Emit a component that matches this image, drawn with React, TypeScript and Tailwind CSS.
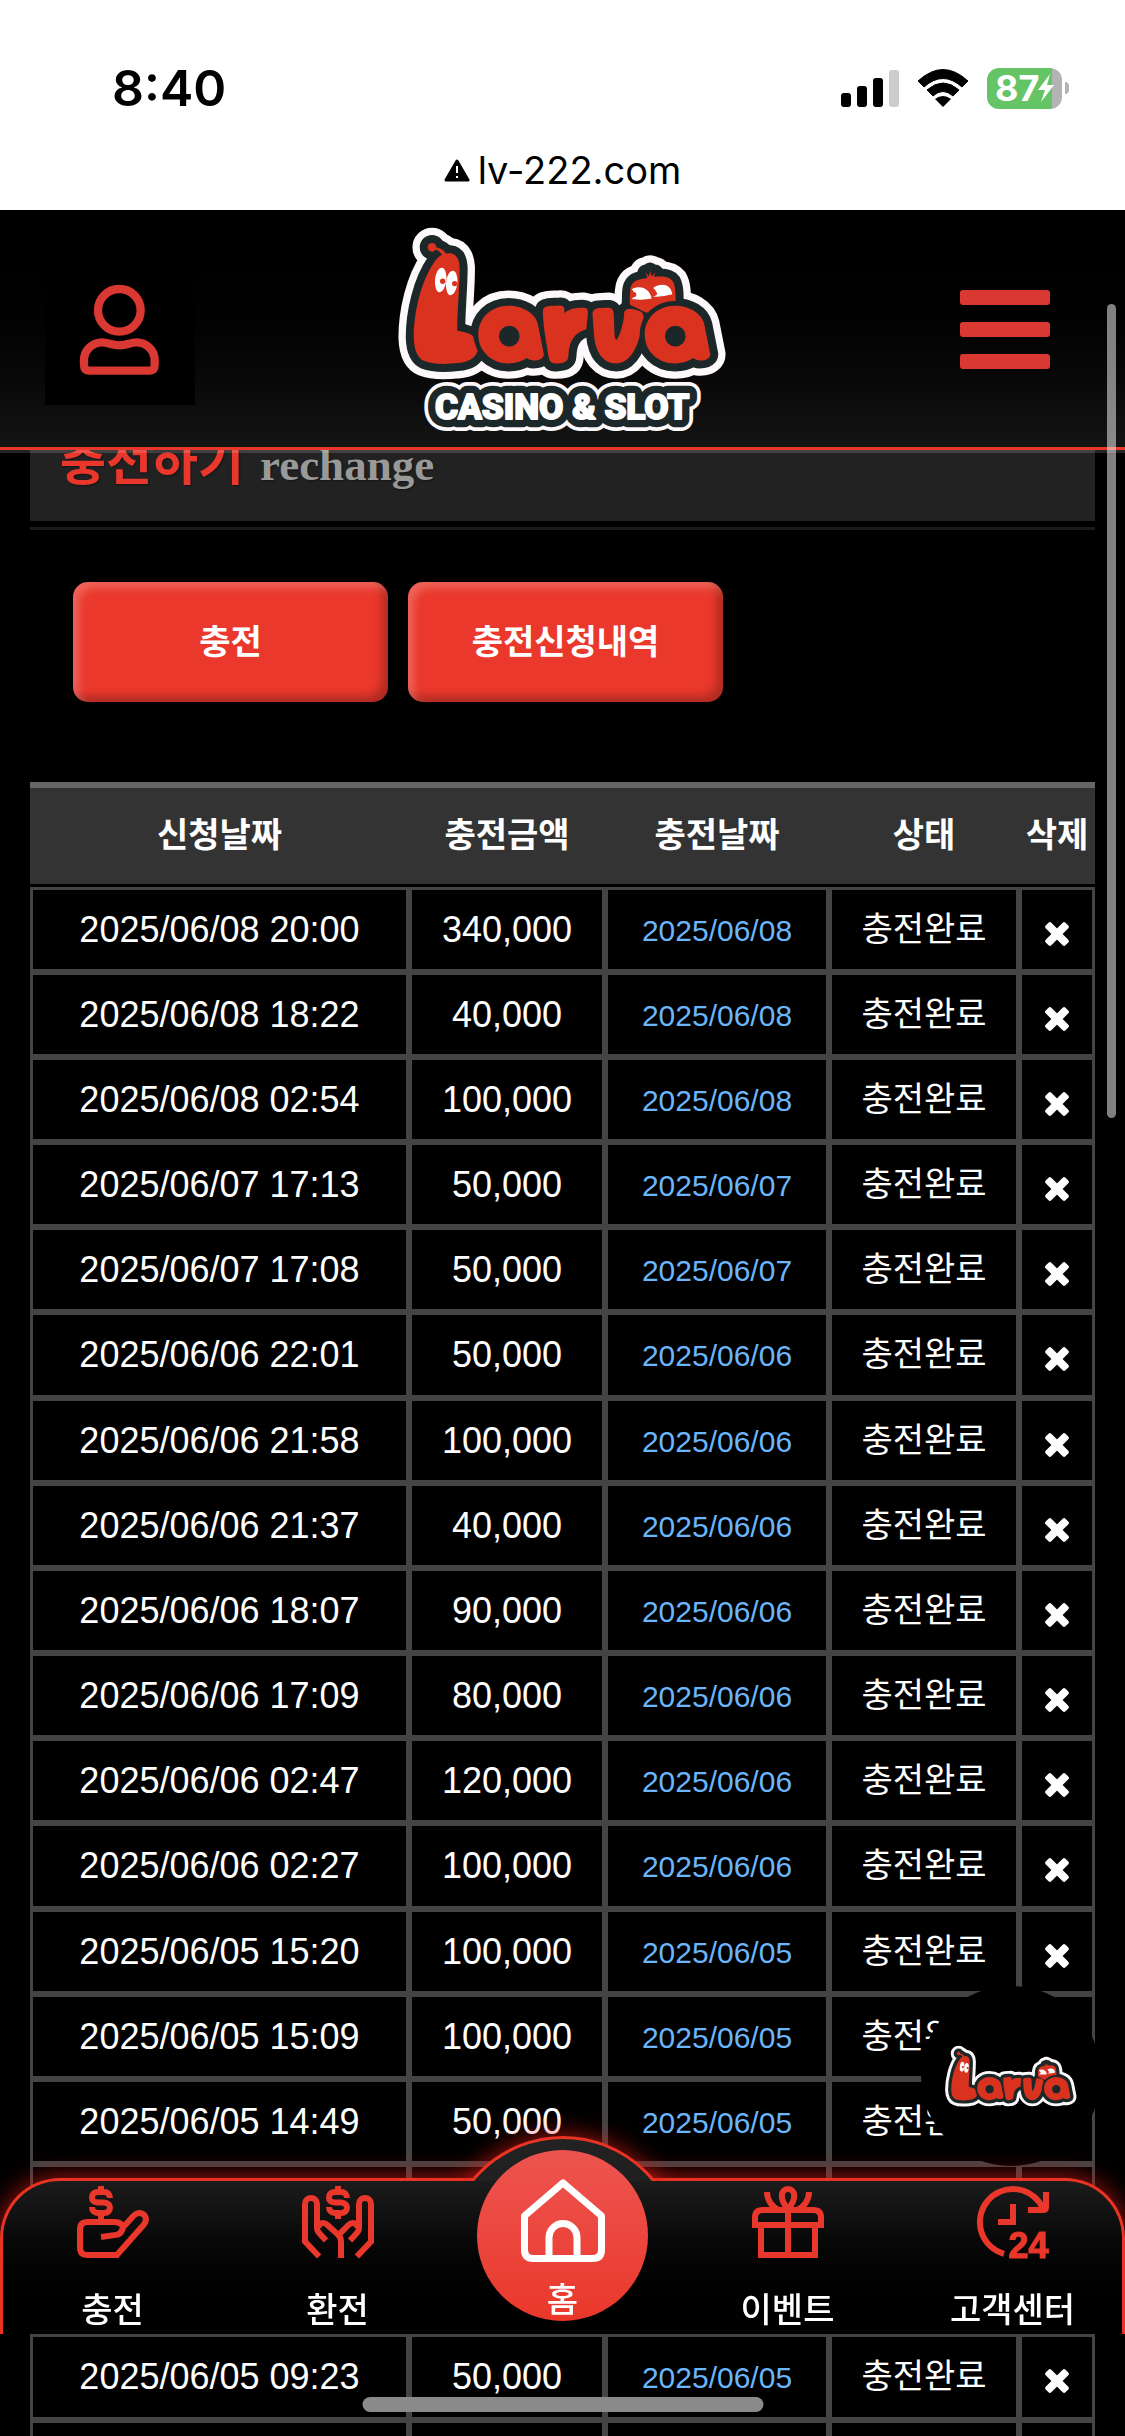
import React from "react";

type Row = { requested: string; amount: string; date: string; status: string };

const done = "충전완료";
const rows: Row[] = [
  ["2025/06/08 20:00", "340,000"],
  ["2025/06/08 18:22", "40,000"],
  ["2025/06/08 02:54", "100,000"],
  ["2025/06/07 17:13", "50,000"],
  ["2025/06/07 17:08", "50,000"],
  ["2025/06/06 22:01", "50,000"],
  ["2025/06/06 21:58", "100,000"],
  ["2025/06/06 21:37", "40,000"],
  ["2025/06/06 18:07", "90,000"],
  ["2025/06/06 17:09", "80,000"],
  ["2025/06/06 02:47", "120,000"],
  ["2025/06/06 02:27", "100,000"],
  ["2025/06/05 15:20", "100,000"],
  ["2025/06/05 15:09", "100,000"],
  ["2025/06/05 14:49", "50,000"],
  ["", ""],
  ["", ""],
  ["2025/06/05 09:23", "50,000"],
  ["", ""],
].map(([requested, amount]) => ({
  requested,
  amount,
  date: requested.slice(0, 10),
  status: requested ? done : "",
}));

function LarvaShapes() {
  return (
    <g strokeLinejoin="round" strokeLinecap="round">
      <circle cx="158" cy="104" r="13" />
      <path d="M160 103Q190 103 202 126L190 130Q182 112 160 109Z" />
      <path d="M752 276L753 238C755 210 765 202 800 197C840 188 870 190 881 205C890 220 890 245 890 268L850 300H800Z" />
      <path d="M806 198L799 180L810 192L813 174L818 192L829 180L823 198Z" />
      <path d="M103 375C103 300 125 205 165 148C178 128 195 121 212 122C235 124 240 145 241 165C241 230 233 300 234 355C255 358 275 364 282 372C285 390 290 402 295 415C288 440 262 450 235 452C200 456 160 456 135 446C113 436 104 410 103 375Z" />
      <path d="M491 300C490 278 505 281 543 279C555 278 558 290 555 303C567 290 590 285 615 286C632 288 626 300 622 350C590 360 570 380 568 430C567 455 540 453 527 453C510 452 508 440 503 400C496 360 492 330 491 300Z" />
      <path d="M640 305C641 284 660 287 690 286C705 288 704 300 705 330C706 365 706 380 712 382C718 382 735 330 735 305C735 286 755 288 775 293C800 300 797 312 782 370C770 420 745 453 712 453C675 453 650 425 645 370Z" />
      <RoundShape />
      <g transform="translate(500 0)">
        <RoundShape />
      </g>
    </g>
  );
}

function RoundShape() {
  return (
    <path d="M388 280C430 280 468 302 476 335L494 425C494 446 455 449 443 437Q420 453 388 453C335 453 297 415 297 366C297 318 335 280 388 280Z" />
  );
}

function LarvaLogo({ tagline = false, className }: { tagline?: boolean; className: string }) {
  return (
    <svg
      viewBox={tagline ? "50 40 1000 625" : "50 40 1000 464"}
      className={className}
      role="img"
      aria-label="Larva"
    >
      <g fill="#fdf9fa" stroke="#fdf9fa" strokeWidth="92">
        <LarvaShapes />
      </g>
      <g fill="#1c2729" stroke="#1c2729" strokeWidth="48">
        <LarvaShapes />
      </g>
      <g fill="#d9331f">
        <LarvaShapes />
      </g>
      <g transform="translate(500 0)" fill="#d9331f" stroke="#1c2729" strokeWidth="30" strokeLinejoin="round" paintOrder="stroke">
        <RoundShape />
      </g>
      <circle cx="390" cy="371" r="31" fill="#1c2729" />
      <circle cx="889" cy="371" r="31" fill="#1c2729" />
      <g fill="#fff">
        <ellipse cx="184" cy="202" rx="17" ry="37" transform="rotate(6 184 202)" />
        <ellipse cx="217" cy="211" rx="17" ry="37" transform="rotate(6 217 211)" />
        <path d="M758 230C785 216 812 228 818 258Q790 264 758 259C770 250 768 240 758 230Z" />
        <path d="M822 226C845 210 875 212 880 245Q850 254 822 252C836 246 834 234 822 226Z" />
      </g>
      <g fill="#d9331f">
        <circle cx="190" cy="206" r="8" />
        <circle cx="226" cy="213" r="8" />
        <circle cx="764" cy="246" r="8" />
        <circle cx="827" cy="243" r="7" />
      </g>
      {tagline && (
        <g
          fontFamily="Roboto, 'Liberation Sans', sans-serif"
          fontWeight="800"
          fontSize="106"
          textAnchor="middle"
          strokeLinejoin="round"
        >
          <text x="549" y="619" fill="#fff" stroke="#fdf9fa" strokeWidth="72">CASINO &amp; SLOT</text>
          <text x="549" y="619" fill="#1c2729" stroke="#1c2729" strokeWidth="50" aria-hidden="true">CASINO &amp; SLOT</text>
          <text x="549" y="619" fill="#fff" stroke="#fff" strokeWidth="6" aria-hidden="true">CASINO &amp; SLOT</text>
        </g>
      )}
    </svg>
  );
}

function StatusBar() {
  return (
    <div className="h-[210px] shrink-0 bg-white font-['Inter',sans-serif] text-black">
      <div className="flex h-[140px] items-center justify-between pt-9 pr-14 pl-28">
        <span className="text-[50px] leading-none font-semibold">8:40</span>
        <div className="flex items-center">
          <div className="flex h-[37px] items-end gap-1.5">
            <i className="h-3.5 w-2.5 rounded-[3px] bg-black" />
            <i className="h-[21px] w-2.5 rounded-[3px] bg-black" />
            <i className="h-[29px] w-2.5 rounded-[3px] bg-black" />
            <i className="h-[37px] w-2.5 rounded-[3px] bg-[#ccc]" />
          </div>
          <svg viewBox="0 0 52 38" className="ml-[18px] h-[38px] w-[52px]" aria-hidden="true">
            <path d="M1 12Q26-11 51 12L45 18Q26 1 7 18Z" stroke="#000" strokeLinejoin="round" />
            <path d="M10 21Q26 7 42 21L36 27Q26 18 16 27Z" stroke="#000" strokeLinejoin="round" />
            <path d="M18 30Q26 24 34 30L26 38Z" />
          </svg>
          <div className="ml-[18px] flex items-center gap-[3px]">
            <div className="flex h-[41px] w-[75px] items-center rounded-xl bg-linear-to-r from-[#65c466] from-87% to-[#b3b3b3] to-87% pl-2">
              <span className="text-[36px] leading-none font-bold text-white">87</span>
              <svg viewBox="0 0 18 28" className="-ml-0.5 h-7 w-[18px] shrink-0 fill-white" aria-hidden="true">
                <path d="M13 0L1 16H8L4 28L17 11H10Z" />
              </svg>
            </div>
            <i className="h-3 w-1 rounded-r-full bg-[#b3b3b3]" />
          </div>
        </div>
      </div>
      <div className="flex h-[60px] items-center justify-center gap-2 text-[38px] leading-none">
        <svg viewBox="0 0 26 24" className="h-6 w-[26px]" aria-hidden="true">
          <path d="M13 3L24 22H2Z" fill="#000" stroke="#000" strokeWidth="3" strokeLinejoin="round" />
          <path d="M13 8V15M13 18V20" stroke="#fff" strokeWidth="2" />
        </svg>
        <span>lv-222.com</span>
      </div>
    </div>
  );
}

function Header() {
  return (
    <header className="relative z-10 flex h-60 shrink-0 items-center justify-between border-b-[3px] border-[#ea372b] bg-linear-to-b from-black to-[#141414] px-[45px] pt-0.5 shadow-[0_3px_0_rgba(255,255,255,0.14)]">
      <button type="button" aria-label="내 정보" className="size-[150px] bg-black">
        <svg viewBox="0 0 450 450" className="size-full" fill="none" stroke="#da3833" strokeWidth="25">
          <circle cx="223" cy="166" r="64" />
          <path d="M117 328V316C117 286 142 262 172 262C190 262 200 271 223 271C246 271 256 262 274 262C304 262 329 286 329 316V328Q329 347 314 347H132Q117 347 117 328Z" />
        </svg>
      </button>
      <a href="#home" className="block">
        <LarvaLogo tagline className="h-[208px] w-[333px]" />
      </a>
      <button type="button" aria-label="메뉴" className="flex size-[150px] flex-col items-center justify-center gap-[17px]">
        <i className="h-[15px] w-[90px] rounded-[3px] bg-[#da3833]" />
        <i className="h-[15px] w-[90px] rounded-[3px] bg-[#da3833]" />
        <i className="h-[15px] w-[90px] rounded-[3px] bg-[#da3833]" />
      </button>
    </header>
  );
}

function ActionButton({ children }: { children: React.ReactNode }) {
  return (
    <button
      type="button"
      className="h-[120px] w-[315px] rounded-[15px] bg-[#ea382c] text-[34px] font-bold text-white shadow-[inset_6px_6px_9px_rgba(255,255,255,0.22),inset_-6px_-6px_9px_rgba(0,0,0,0.25)]"
    >
      {children}
    </button>
  );
}

const cell = "border-[3px] border-[#444] p-0";

function HistoryTable() {
  return (
    <table className="w-full table-fixed border-separate border-spacing-0 text-center text-white">
      <colgroup>
        <col className="w-[379px]" />
        <col className="w-[196px]" />
        <col className="w-[224px]" />
        <col className="w-[190px]" />
        <col className="w-[76px]" />
      </colgroup>
      <thead>
        <tr className="h-[105px] text-[34px] leading-[48px]">
          {["신청날짜", "충전금액", "충전날짜", "상태", "삭제"].map((label) => (
            <th key={label} scope="col" className="border-t-[6px] border-b-[3px] border-t-[#666] border-b-black bg-[#333] p-0 pb-0.5 font-bold whitespace-nowrap">
              {label}
            </th>
          ))}
        </tr>
      </thead>
      <tbody>
        {rows.map((row, index) => (
          <tr key={index} className="h-[85px] text-[36px] leading-[48px] [&:nth-child(6n)]:h-[86px]">
            <td className={cell}>{row.requested}</td>
            <td className={cell}>{row.amount}</td>
            <td className={cell}>
              <span className="text-[30px] text-[#6bb5fa]">{row.date}</span>
            </td>
            <td className={cell}>
              <span className="block pb-0.5 text-[34px]">{row.status}</span>
            </td>
            <td className={cell}>
              {row.requested && (
                <button type="button" aria-label="삭제" className="mt-2 block w-full">
                  <svg viewBox="0 0 28 28" className="mx-auto size-7 fill-white">
                    <rect x="0" y="10" width="28" height="8" rx="2" transform="rotate(45 14 14)" />
                    <rect x="0" y="10" width="28" height="8" rx="2" transform="rotate(-45 14 14)" />
                  </svg>
                </button>
              )}
            </td>
          </tr>
        ))}
      </tbody>
    </table>
  );
}

const dollar = "M3 4C3 2.700 2.200 2 1 2H-1C-2.300 2-3 2.700-3 3.800C-3 5-2.300 5.400-1 5.500H1C2.400 5.700 3 6.200 3 7.200C3 8.300 2.300 9 1 9H-1C-2.200 9-3 8.300-3 7";

function DepositIcon() {
  return (
    <>
      <g transform="translate(8 0)">
        <path d={dollar} />
        <path d="M0 0V2M0 9V12" />
      </g>
      <path d="M8 17L13 16.300C15 16 15.800 13.600 14.800 12.800Q14 12 12.500 12H3.500Q1 12 1 14.500V20.500Q1 23 3.500 23H13.300L22.300 12.800C23.600 11.300 22.900 9.200 21 9C20 8.900 19.400 9.400 18.800 10L15 14.200" />
    </>
  );
}

function WithdrawIcon() {
  return (
    <>
      <g transform="translate(12 0)">
        <path d={dollar} />
        <path d="M0 0V2M0 9V11" />
      </g>
      <path d="M5.700 23.500L1 18.500V6C1 3.300 5 3.300 5 6V14Q5 15 6 16L8 18.200M5.500 14C5.500 12 7.500 12 8.500 13L12 16.200Q13 17.200 13 18.500V24" />
      <path d="M18.300 23.500L23 18.500V6C23 3.300 19 3.300 19 6V14Q19 15 18 16L16 18.200M18.500 14C18.500 12 16.500 12 15.500 13L12.300 16.200" />
    </>
  );
}

function GiftIcon() {
  return (
    <path d="M1 14V10.500Q1 8 3.500 8H20.500Q23 8 23 10.500V14M1 13H23M3 13V23H21V13M12 8V23M12 7.500C9 4.500 9.500 1 12 1C14.500 1 15 4.500 12 7.500ZM19 2C19 4.500 17.500 7 15 8M5 2C5 4.500 6.500 7 9 8" />
  );
}

function SupportIcon() {
  return (
    <>
      <path d="M9 22.600A11 11 0 1 1 22 7.500M23 2V7Q23 8 22 8H17M12 6V12H7" />
      <text x="10.500" y="24" fontSize="12" fontWeight="700" fontFamily="'Liberation Sans', sans-serif" fill="currentColor" strokeWidth="0.400">
        24
      </text>
    </>
  );
}

function NavItem({ label, children }: { label: string; children: React.ReactNode }) {
  return (
    <a href="#menu" className="flex flex-col items-center pt-2">
      <svg viewBox="0 0 24 24" className="size-[72px] shrink-0 overflow-visible text-[#ea372b]" fill="none" stroke="currentColor" strokeWidth="2" aria-hidden="true">
        {children}
      </svg>
      <span className="mt-7 text-[34px] leading-[48px] font-medium">{label}</span>
    </a>
  );
}

function BottomNav() {
  return (
    <nav className="fixed inset-x-0 bottom-[102px] z-20 h-[156px] text-white">
      <div className="absolute inset-x-0 -top-16 bottom-0 overflow-hidden pt-16">
        <div className="h-full rounded-t-[60px] border-x-[3px] border-t-[3px] border-[#ea3323] bg-linear-to-b from-[#1c1c1c] to-black shadow-[0_0_24px_rgba(234,30,20,0.75)]" />
      </div>
      <div className="absolute -top-[72px] left-1/2 h-[75px] w-[300px] -translate-x-1/2 overflow-hidden">
        <div className="mx-auto mt-[30px] size-[236px] rounded-full border-[3px] border-[#ea3323] bg-linear-to-b from-[#222] to-[#171717] shadow-[0_0_24px_rgba(234,30,20,0.75)]" />
      </div>
      <div className="relative grid h-full grid-cols-5">
        <NavItem label="충전"><DepositIcon /></NavItem>
        <NavItem label="환전"><WithdrawIcon /></NavItem>
        <a
          href="#home"
          className="-mt-7 flex size-[171px] flex-col items-center justify-self-center rounded-full bg-linear-to-b from-[#ed544f] to-[#ea372a] pt-7"
        >
          <svg viewBox="0 0 24 24" className="size-[84px] shrink-0" fill="none" stroke="#fff" strokeWidth="2" aria-hidden="true">
            <path d="M12 1.400L1 10.800V20.500Q1 23 3.500 23H20.500Q23 23 23 20.500V10.800Z" strokeLinejoin="round" />
            <path d="M8 23V17A4 4 0 0 1 16 17V23" />
          </svg>
          <span className="mt-3.5 text-[34px] leading-[48px] font-medium">홈</span>
        </a>
        <NavItem label="이벤트"><GiftIcon /></NavItem>
        <NavItem label="고객센터"><SupportIcon /></NavItem>
      </div>
    </nav>
  );
}

export default function App() {
  return (
    <div className="flex h-screen flex-col overflow-hidden bg-black font-['Liberation_Sans','Noto_Sans_CJK_KR',sans-serif]">
      <StatusBar />
      <Header />
      <main className="min-h-0 flex-1 overflow-hidden px-[30px]">
        <h1 className="-mt-[29px] flex h-[100px] items-baseline gap-4 bg-[#222] px-[30px] leading-[84px] font-bold [text-shadow:1px_1px_2px_rgba(0,0,0,0.4)]">
          <span className="text-[50px] text-[#ea372b]">충전하기</span>
          <span className="font-['Liberation_Serif',serif] text-[45px] text-[#999]">rechange</span>
        </h1>
        <div className="mt-1.5 h-[3px] bg-[#1a1a1a]" />
        <div className="mt-[52px] mb-20 flex gap-5 px-[43px]">
          <ActionButton>충전</ActionButton>
          <ActionButton>충전신청내역</ActionButton>
        </div>
        <HistoryTable />
      </main>
      <a href="#larva" className="fixed right-6 bottom-[270px] z-10 flex size-[180px] items-center justify-center rounded-full bg-black">
        <LarvaLogo className="h-[62px] w-[134px]" />
      </a>
      <BottomNav />
      <div className="fixed top-[304px] right-[9px] z-30 h-[814px] w-[9px] rounded-full bg-white/50" />
      <div className="fixed bottom-6 left-1/2 z-30 h-[15px] w-[401px] -translate-x-1/2 rounded-full bg-[#8a8a8a]" />
    </div>
  );
}
